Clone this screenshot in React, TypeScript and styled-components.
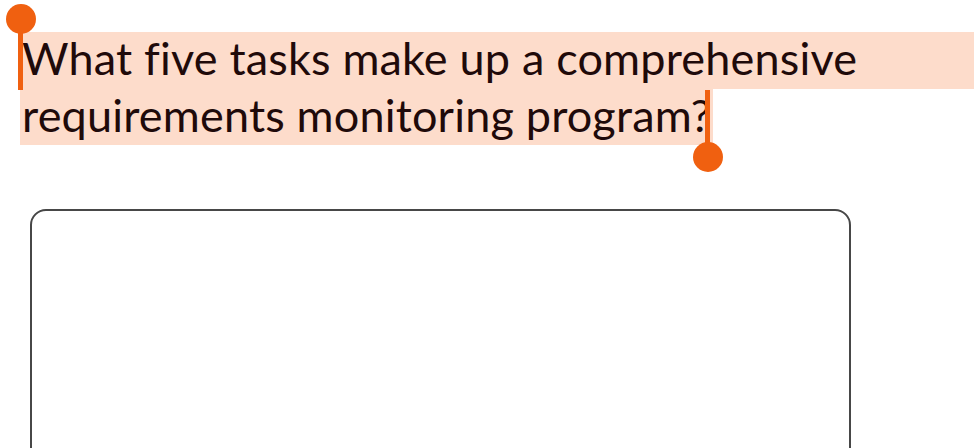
import React from 'react'
import styled, { createGlobalStyle } from 'styled-components'

const GlobalStyle = createGlobalStyle`
  html, body {
    margin: 0;
    background: #ffffff;
  }
  body {
    font-family: Lato, "Noto Sans", sans-serif;
  }
`

const Page = styled.div`
  width: 978px;
  height: 448px;
  overflow: hidden;
  padding: 32px 4px 0 20px;
  box-sizing: border-box;
`

const Question = styled.div`
  position: relative;
  display: flex;
  flex-direction: column;
  align-items: flex-start;
  font-size: 45px;
  letter-spacing: 0.18px;
  color: #1f0a0a;
`

const Line = styled.span<{ $full?: boolean }>`
  display: block;
  align-self: ${(p) => (p.$full ? 'stretch' : 'flex-start')};
  height: 56.5px;
  line-height: 52px;
  padding: 0 2px 0 2px;
  box-sizing: border-box;
  background: #fddccb;
  white-space: nowrap;
`

const Handle = styled.div<{ $end?: boolean }>`
  position: absolute;
  width: 5px;
  height: 60px;
  background: #f06010;
  left: ${(p) => (p.$end ? '685px' : '-2px')};
  top: ${(p) => (p.$end ? '58px' : '-2px')};

  &::after {
    content: '';
    position: absolute;
    width: 30px;
    height: 30px;
    border-radius: 50%;
    background: #f06010;
    left: -12.5px;
    top: ${(p) => (p.$end ? '52px' : '-26px')};
  }
`

const Answer = styled.div`
  margin: 64px 0 0 10px;
  width: 821px;
  height: 300px;
  border: 2px solid #474747;
  border-radius: 16px;
  box-sizing: border-box;
`

export default function App() {
  return (
    <Page>
      <GlobalStyle />
      <Question>
        <Line $full>What five tasks make up a comprehensive</Line>
        <Line>requirements monitoring program?</Line>
        <Handle />
        <Handle $end />
      </Question>
      <Answer />
    </Page>
  )
}
